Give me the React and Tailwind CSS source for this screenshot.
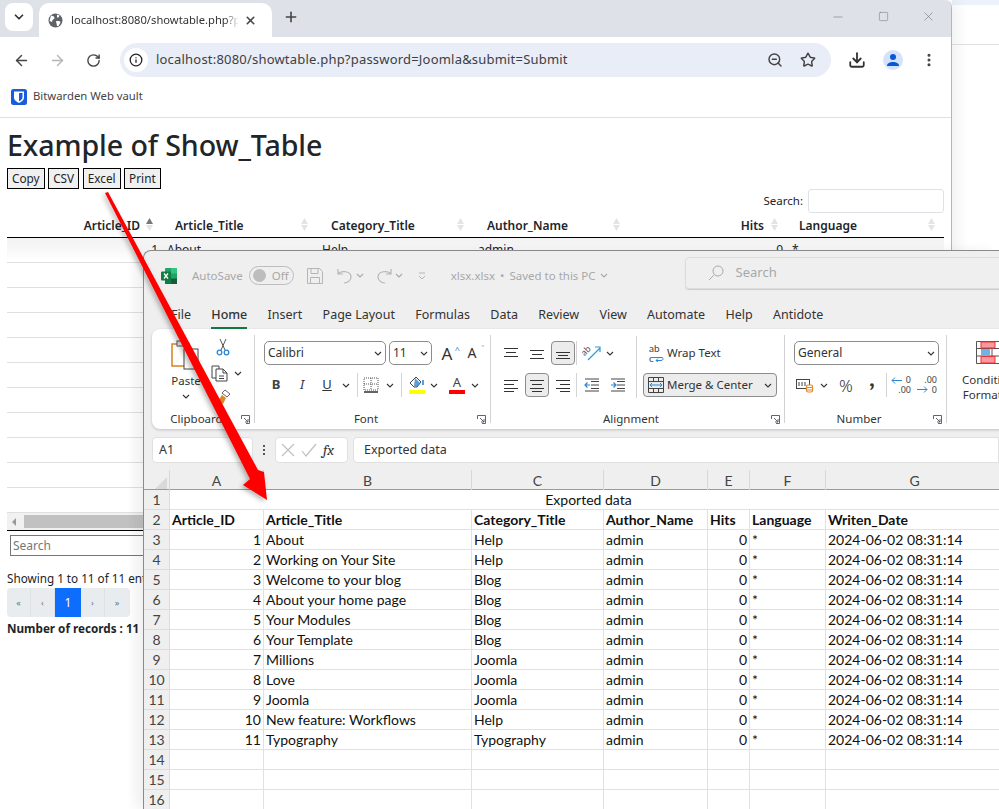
import React from "react";
import { ArrowLeft, ArrowRight, RotateCw, X, Plus, ChevronDown, Star, Download, MoreVertical, Info, ZoomOut, Minus, Square } from "lucide-react";

const ui = { fontFamily: '"Noto Sans", sans-serif' };
const calibri = { fontFamily: 'Lato, sans-serif' };

const Chev = ({ className = "" }) => (
  <svg width="8" height="5" viewBox="0 0 8 5" className={`shrink-0 ${className}`}><path d="M1 1l3 3 3-3" fill="none" stroke="currentColor" strokeWidth="1.1" /></svg>
);
const Lines = ({ rows, color = "#333" }) => (
  <svg width="16" height="14" viewBox="0 0 16 14">
    {rows.map(([a, b, y], i) => <path key={i} d={`M${a} ${y + 0.5}H${b}`} stroke={color} strokeWidth="1" />)}
  </svg>
);
const Launcher = () => (
  <svg width="9" height="9" viewBox="0 0 9 9" className="text-gray-600"><path d="M0.5 4V0.5H8.5V8.5H5M3 3l4 4M7 4v3H4" fill="none" stroke="currentColor" strokeWidth="0.9" /></svg>
);
const Divider = () => <div className="w-px h-[24px] bg-[#d4d4d4] shrink-0" />;

function Group({ label, className, children, launcher = true }) {
  return (
    <div className={`h-[88px] shrink-0 border-r border-[#d2d2d2] flex flex-col ${className}`}>
      {children}
      <div className="mt-auto -mb-[4px] h-[16px] flex items-center text-[11.5px] text-[#333]">
        <div className="flex-1 text-center">{label}</div>
        {launcher && <div className="w-[13px] flex items-center"><Launcher /></div>}
      </div>
    </div>
  );
}

function PasteIcon() {
  return (
    <svg width="30" height="30" viewBox="0 0 30 30">
      <rect x="1" y="4" width="17" height="22" fill="#fff" stroke="#d98a2b" strokeWidth="1.6" />
      <rect x="6" y="1" width="8" height="5" fill="#f4f4f4" stroke="#555" />
      <rect x="13" y="9" width="14" height="20" fill="#fff" stroke="#444" />
    </svg>
  );
}
function Scissors() {
  return (
    <svg width="14" height="18" viewBox="0 0 14 18">
      <path d="M4 1l5 11M10 1L5 12" stroke="#555" strokeWidth="1" fill="none" />
      <circle cx="3.5" cy="14.5" r="2.3" fill="none" stroke="#2e86d1" strokeWidth="1.3" />
      <circle cx="10.5" cy="14.5" r="2.3" fill="none" stroke="#2e86d1" strokeWidth="1.3" />
    </svg>
  );
}
function CopyIcon() {
  return (
    <svg width="17" height="17" viewBox="0 0 17 17" fill="none" stroke="#444">
      <path d="M5 13H1V1h7v3" />
      <path d="M5 4h7l4 4v8H5zM12 4v4h4M8 11h5M8 13.5h5" />
    </svg>
  );
}
function Brush() {
  return (
    <svg width="14" height="16" viewBox="0 0 14 16">
      <path d="M8 1l5 4-3 3-5-4z" fill="none" stroke="#666" />
      <path d="M5 6l4 3-3 6-5-3z" fill="#d98a2b" />
    </svg>
  );
}
function BorderIcon() {
  return (
    <svg width="16" height="16" viewBox="0 0 16 16" fill="none">
      <path d="M1 1h14v12H1zM8 1v12M1 7h14" stroke="#555" strokeDasharray="1 1" />
      <path d="M1 15h14" stroke="#222" strokeWidth="1.4" />
    </svg>
  );
}
function FillIcon() {
  return (
    <div className="flex flex-col items-center">
      <svg width="16" height="13" viewBox="0 0 16 13" fill="none">
        <path d="M1 7l6-6 5 5-4 5H5z" stroke="#444" />
        <path d="M6 2l5 5-3 4-3-1z" fill="#2e86d1" opacity=".8" />
        <path d="M14 4v5" stroke="#2e86d1" strokeWidth="1.6" />
      </svg>
      <div className="w-[16px] h-[4px] bg-[#ffff00] mt-px" />
    </div>
  );
}
function FontColorIcon() {
  return (
    <div className="flex flex-col items-center text-[13px] leading-[13px] text-[#444]">
      <span>A</span>
      <div className="w-[16px] h-[4px] bg-[#ff0000] mt-px" />
    </div>
  );
}
function Orient() {
  return (
    <svg width="20" height="18" viewBox="0 0 20 18" fill="none">
      <text x="0" y="10" fontSize="9" fill="#444" transform="rotate(-45 4 8)" style={calibri}>ab</text>
      <path d="M6 16L18 4M13 3h5v5" stroke="#2e9bdc" strokeWidth="1.2" />
    </svg>
  );
}
function Indent({ flip }) {
  return (
    <svg width="16" height="14" viewBox="0 0 16 14" fill="none">
      <path d="M7 3.500h8M7 7h8M7 10.500h8M1 13h14M1 1h14" stroke="#444" />
      {flip
        ? <path d="M1 7h5M3.500 4.500L6 7 3.500 9.500" stroke="#2e86d1" strokeWidth="1.2" />
        : <path d="M1 7h5M3.500 4.500L1 7l2.500 2.500" stroke="#2e86d1" strokeWidth="1.2" />}
    </svg>
  );
}
function WrapIcon() {
  return (
    <div className="relative w-[14px] h-[20px] text-[10px] leading-[10px] text-[#444]" style={calibri}>
      <span>ab<br />c</span>
      <svg width="11" height="8" viewBox="0 0 11 8" className="absolute right-[-1px] bottom-[1px]" fill="none"><path d="M0 3.500h9c1.500 0 1.500 3-1 3H3M5 4.500L3 6.500 5 8" stroke="#2e86d1" /></svg>
    </div>
  );
}
function MergeIcon() {
  return (
    <svg width="16" height="16" viewBox="0 0 16 16" fill="none">
      <path d="M.5.5h15v15H.5zM.5 4.500h15M.5 11.500h15M5.500.5v4M10.500.5v4M5.500 11.500v4M10.500 11.500v4" stroke="#444" />
      <path d="M2 8h12M4 6L2 8l2 2M12 6l2 2-2 2" stroke="#2e86d1" />
    </svg>
  );
}
function AccIcon() {
  return (
    <svg width="18" height="15" viewBox="0 0 18 15" fill="none">
      <rect x=".5" y="1.500" width="13" height="9" stroke="#444" fill="#fff" />
      <path d="M3 4v4M6 4v4M9 4v4" stroke="#444" />
      <rect x="10.500" y="7" width="6" height="7" rx="1.500" fill="#fff" stroke="#e08a2b" strokeWidth="1.200" />
      <path d="M10.500 9.500h6M10.500 12h6" stroke="#e08a2b" />
    </svg>
  );
}
function DecIcon({ inc }) {
  return (
    <div className="relative w-[20px] h-[20px] text-[9px] leading-[10px] text-[#444] text-right" style={ui}>
      {inc ? <div>0<br />.00</div> : <div>.00<br />0</div>}
      <svg width="11" height="7" viewBox="0 0 11 7" fill="none" className={`absolute ${inc ? "left-0 top-[2px]" : "left-0 bottom-[2px]"}`}>
        {inc ? <path d="M11 3.500H1M4 .5l-3 3 3 3" stroke="#2e86d1" /> : <path d="M0 3.500h10M7 .5l3 3-3 3" stroke="#2e86d1" />}
      </svg>
    </div>
  );
}
function CondIcon() {
  return (
    <svg width="34" height="23" viewBox="0 0 34 23" fill="none">
      <path d="M.5.5h33v22H.5zM.5 7.500h33M.5 15h33M8 .5v22M16 .5v22" stroke="#555" />
      <rect x="5" y="1" width="14" height="6" fill="#f59aa0" stroke="#e33" />
      <rect x="5" y="8" width="9" height="7" fill="#6fb4e6" />
      <rect x="5" y="15.500" width="14" height="6.500" fill="#f59aa0" stroke="#e33" />
    </svg>
  );
}
function ExcelLogo() {
  return (
    <svg width="16" height="16" viewBox="0 0 16 16" className="shrink-0">
      <rect x="4" y="0" width="12" height="16" rx="1" fill="#21a366" />
      <rect x="10" y="0" width="6" height="5.500" fill="#33c481" />
      <rect x="10" y="10.500" width="6" height="5.500" fill="#185c37" />
      <rect x="4" y="10.500" width="6" height="5.500" fill="#107c41" />
      <rect x="0" y="3.500" width="10" height="9" rx="1" fill="#107c41" />
      <path d="M3 5.500l4 5M7 5.500l-4 5" stroke="#fff" strokeWidth="1.300" />
    </svg>
  );
}
function Bitwarden() {
  return (
    <svg width="16" height="16" viewBox="0 0 16 16">
      <rect width="16" height="16" rx="2.500" fill="#175ddc" />
      <path d="M3 2.500h10v6c0 3-3 4.500-5 5.500-2-1-5-2.500-5-5.500z" fill="#fff" />
      <path d="M8 4h3.500v4.500c0 2-2 3-3.500 3.800z" fill="#175ddc" />
    </svg>
  );
}
function SolidGlobe() {
  return (
    <svg width="15" height="15" viewBox="0 0 15 15" className="shrink-0">
      <circle cx="7.500" cy="7.500" r="7" fill="#5f6368" />
      <path d="M3 2.500l3 1 .5 2-2 1.500-.5 2L1.500 8zM9 1.500l2.500 1-1 2H9zM8 8h3.500l1 1.500-2 3.500H9z" fill="#fff" />
    </svg>
  );
}

const headers = [
  ["Article_ID", "pl-0 justify-end pr-[22px]", true],
  ["Article_Title", "pl-[13px]"],
  ["Category_Title", "pl-[14px]"],
  ["Author_Name", "pl-[14px]"],
  ["Hits", "justify-end pr-[23px]"],
  ["Language", "pl-[12px]"],
];

function WebHeader({ text, cls, sorted }) {
  return (
    <div className={`relative flex items-center h-full ${cls}`}>
      <span className="mt-[2px] text-[12px] font-semibold text-[#212529] leading-none">{text}</span>
      <svg width="9" height="14" viewBox="0 0 9 14" className="absolute right-[8px] top-[5px]">
        <path d="M4.500 0L8 6H1z" fill={sorted ? "#777" : "#e4e4e4"} />
        <path d="M4.500 13L8 7H1z" fill="#e4e4e4" />
      </svg>
    </div>
  );
}

function Browser() {
  return (
    <div className="absolute left-0 top-0 w-[952px] h-[809px] bg-white border-r border-[#b5b5b5] rounded-tr-[8px] overflow-hidden flex flex-col shadow-[6px_0_14px_rgba(0,0,0,0.06)]" style={ui}>
      <div className="h-[37px] bg-[#dee1e8] flex items-start pt-[3px] pl-[5px] shrink-0">
        <div className="w-[28px] h-[28px] bg-white rounded-[8px] flex items-center justify-center text-[#333]"><ChevronDown size={14} strokeWidth={3} /></div>
        <div className="ml-[6px] w-[233px] h-[34px] bg-white rounded-t-[10px] flex items-center pl-[9px] pr-[7px]">
          <SolidGlobe />
          <span className="ml-[8px] text-[11.200px] text-[#333] whitespace-nowrap overflow-hidden w-[168px] shrink-0 [mask-image:linear-gradient(to_left,transparent,black_14px)]">localhost:8080/showtable.php?password=Joomla</span>
          <X size={13} strokeWidth={3} className="ml-[5px] shrink-0 text-[#444]" />
        </div>
        <Plus size={16} strokeWidth={2.400} className="ml-[11px] mt-[6px] text-[#444]" />
        <div className="ml-auto flex items-center mt-[6px] text-[#777] pr-[15px]">
          <Minus size={14} strokeWidth={1} className="mr-[33px]" />
          <Square size={11} strokeWidth={1.200} className="mr-[32px]" />
          <X size={15} strokeWidth={1} />
        </div>
      </div>
      <div className="h-[43px] pt-[3px] flex items-center shrink-0 relative rounded-t-[8px]">
        <ArrowLeft size={17} strokeWidth={2} className="ml-[13px] text-[#444]" />
        <ArrowRight size={17} strokeWidth={2} className="ml-[19px] text-[#b5b5b5]" />
        <RotateCw size={15} strokeWidth={2.200} className="ml-[20px] text-[#444]" />
        <div className="ml-[19px] w-[711px] h-[34px] bg-[#e9edf7] rounded-full flex items-center pl-[4px] pr-[15px]">
          <div className="w-[24px] h-[24px] rounded-full bg-white flex items-center justify-center"><Info size={14} strokeWidth={2.200} className="text-[#222]" /></div>
          <span className="ml-[8px] text-[13px] text-[#3c4043] tracking-[0.2px]">localhost:8080/showtable.php?password=Joomla&amp;submit=Submit</span>
          <ZoomOut size={16} strokeWidth={2.200} className="ml-auto mr-[1px] text-[#444]" />
          <Star size={16} strokeWidth={2.200} className="ml-[16px] text-[#444]" />
        </div>
        <Download size={18} strokeWidth={2.400} className="ml-[17px] text-[#333]" />
        <div className="ml-[17px] w-[20px] h-[20px] rounded-full bg-[#d3e3fd] flex items-center justify-center overflow-hidden">
          <svg width="14" height="14" viewBox="0 0 14 14"><circle cx="7" cy="4" r="3" fill="#0b57d0" /><path d="M1 13c0-3 3-4 6-4s6 1 6 4z" fill="#0b57d0" /></svg>
        </div>
        <MoreVertical size={16} strokeWidth={2.600} className="ml-[18px] text-[#444]" />
      </div>
      <div className="h-[38px] pb-[4px] border-b border-[#e0e0e0] flex items-center pl-[11px] shrink-0">
        <Bitwarden />
        <span className="ml-[6px] text-[11.300px] text-[#444]">Bitwarden Web vault</span>
      </div>
      <div className="px-[7px] flex-1 flex flex-col text-[#212529]">
        <h1 className="text-[28.600px] leading-[36px] font-medium mt-[9px] tracking-[-0.1px]">Example of Show_Table</h1>
        <div className="flex gap-[3.500px] mt-[5px]">
          {["Copy", "CSV", "Excel", "Print"].map((b) => (
            <button key={b} className="h-[21px] px-[4px] bg-[#f0f0f0] border border-black text-[11.800px] leading-none">{b}</button>
          ))}
        </div>
        <div className="flex items-center justify-end h-[24px] text-[11.500px] w-[937px]">
          <span className="mr-[5px]">Search:</span>
          <div className="w-[136px] h-[24px] border border-[#dee2e6] rounded-[3px] bg-white" />
        </div>
        <div className="grid grid-cols-[155px_155px_156px_156px_158px_157px] h-[25px] w-[937px] border-b border-black shrink-0">
          {headers.map(([t, c, s]) => <WebHeader key={t} text={t} cls={c} sorted={s} />)}
        </div>
        <div className="grid grid-cols-[155px_155px_156px_156px_158px_157px] w-[937px] text-[12px] shrink-0 border-b border-[#dfdfdf] h-[25px] items-center bg-gradient-to-b from-[#f2f2f2] to-white">
          <div className="text-right pr-[4px]">1</div><div className="pl-[5px]">About</div><div className="pl-[5px]">Help</div><div className="pl-[5px]">admin</div><div className="text-right pr-[4px]">0</div><div className="pl-[5px]">*</div>
        </div>
        {Array.from({ length: 10 }).map((_, i) => (
          <div key={i} className="h-[25px] w-[937px] border-b border-[#dfdfdf] shrink-0" />
        ))}
        <div className="h-[18px] w-[937px] bg-[#f1f1f1] border-b border-black flex items-center shrink-0">
          <span className="w-0 h-0 ml-[5px] border-y-[4px] border-y-transparent border-r-[4px] border-r-[#999]" />
          <div className="ml-[8px] w-[900px] h-[13px] bg-[#c1c1c1]" />
        </div>
        <div className="h-[21px] w-[300px] ml-[3px] mt-[4px] border border-[#767676] text-[12px] text-[#777] pl-[2px] flex items-center shrink-0">Search</div>
        <div className="mt-[14px] text-[11.700px] leading-[16px] whitespace-nowrap">Showing 1 to 11 of 11 entries</div>
        <div className="mt-[2px] flex h-[29px] w-[123px] bg-[#e9ecef] rounded-[4px] overflow-hidden text-[9px] text-[#6c757d] shrink-0">
          {["«", "‹"].map((s) => <div key={s} className="w-[24px] border-r border-[#dee2e6] flex items-center justify-center">{s}</div>)}
          <div className="w-[26px] bg-[#0d6efd] text-white text-[12px] flex items-center justify-center">1</div>
          {["›", "»"].map((s) => <div key={s} className="w-[24px] border-r border-[#dee2e6] flex items-center justify-center last:border-r-0">{s}</div>)}
        </div>
        <div className="mt-[3px] text-[11.700px] font-bold">Number of records  : 11</div>
      </div>
    </div>
  );
}

const rows = [
  [1, "About", "Help"], [2, "Working on Your Site", "Help"], [3, "Welcome to your blog", "Blog"],
  [4, "About your home page", "Blog"], [5, "Your Modules", "Blog"], [6, "Your Template", "Blog"],
  [7, "Millions", "Joomla"], [8, "Love", "Joomla"], [9, "Joomla", "Joomla"],
  [10, "New feature: Workflows", "Help"], [11, "Typography", "Typography"],
];
const cols = "grid grid-cols-[26px_94px_208px_132px_104px_42px_76px_178px]";
const cell = "h-[20px] bg-white border-r border-b border-[#e1e1e1] px-[2px] flex items-center whitespace-nowrap overflow-hidden";
const rh = "h-[20px] bg-[#efefef] border-r border-b border-[#dcdcdc] flex items-center justify-center text-[#444]";

function Sheet() {
  return (
    <div className="text-[14px] text-[#111]" style={calibri}>
      <div className={`${cols} h-[20px] border-b border-[#9a9a9a] bg-[#efefef] text-[#444]`}>
        <div className="relative border-r border-[#d8d8d8]">
          <span className="absolute right-[2px] bottom-[2px] w-0 h-0 border-l-[12px] border-l-transparent border-b-[12px] border-b-[#d9d9d9]" />
        </div>
        {["A", "B", "C", "D", "E", "F", "G"].map((c) => (
          <div key={c} className="border-r border-[#d8d8d8] flex items-center justify-center">{c}</div>
        ))}
      </div>
      <div className={cols}>
        <div className={rh}>1</div>
        <div className={`${cell} col-span-7 justify-center pl-[6px]`}>Exported data</div>
        <div className={rh}>2</div>
        {["Article_ID", "Article_Title", "Category_Title", "Author_Name", "Hits", "Language", "Writen_Date"].map((h) => (
          <div key={h} className={`${cell} font-bold`}>{h}</div>
        ))}
        {rows.map(([id, title, cat], i) => (
          <React.Fragment key={id}>
            <div className={rh}>{i + 3}</div>
            <div className={`${cell} justify-end`}>{id}</div>
            <div className={cell}>{title}</div>
            <div className={cell}>{cat}</div>
            <div className={cell}>admin</div>
            <div className={`${cell} justify-end`}>0</div>
            <div className={cell}>*</div>
            <div className={cell}>2024-06-02 08:31:14</div>
          </React.Fragment>
        ))}
        {[14, 15, 16].map((n) => (
          <React.Fragment key={n}>
            <div className={rh}>{n}</div>
            {Array.from({ length: 7 }).map((_, i) => <div key={i} className={cell} />)}
          </React.Fragment>
        ))}
      </div>
    </div>
  );
}

function Excel() {
  const tabs = ["File", "Home", "Insert", "Page Layout", "Formulas", "Data", "Review", "View", "Automate", "Help", "Antidote"];
  return (
    <div className="absolute left-[143px] top-[250px] w-[856px] h-[559px] bg-[#efefef] border-l border-t border-[#8a8a8a] rounded-tl-[8px] overflow-hidden flex flex-col shadow-[-8px_0_12px_rgba(0,0,0,0.06)]" style={ui}>
      <div className="h-[44px] pt-[5px] flex items-center text-[#a8a8a8] text-[11.500px] shrink-0 pl-[17px] whitespace-nowrap">
        <ExcelLogo />
        <span className="ml-[15px]">AutoSave</span>
        <div className="ml-[6px] w-[45px] h-[19px] shrink-0 rounded-full border border-[#bdbdbd] flex items-center pl-[3px]">
          <span className="w-[13px] h-[13px] rounded-full bg-[#bdbdbd]" />
          <span className="ml-[6px]">Off</span>
        </div>
        <svg width="16" height="16" viewBox="0 0 16 16" fill="none" stroke="#b5b5b5" className="ml-[13px] shrink-0"><path d="M.5.5h12l3 3v12H.5zM4 .5v5h7v-5M3.500 15.500v-6h9v6" /></svg>
        <svg width="16" height="16" viewBox="0 0 16 16" fill="none" stroke="#b5b5b5" strokeWidth="1.200" className="ml-[14px] shrink-0"><path d="M1 1v5h5M1 6c3-4 13-3 13 3 0 3-3 6-7 6" /></svg>
        <Chev className="ml-[3px]" />
        <svg width="16" height="16" viewBox="0 0 16 16" fill="none" stroke="#b5b5b5" strokeWidth="1.200" className="ml-[12px] shrink-0"><path d="M15 1v5h-5M15 6C12 2 2 3 2 9c0 3 3 6 7 6" /></svg>
        <Chev className="ml-[3px]" />
        <svg width="8" height="8" viewBox="0 0 8 8" fill="none" stroke="#b5b5b5" className="ml-[15px] shrink-0"><path d="M1 1h6M1 4l3 3 3-3" /></svg>
        <span className="ml-[25px]">xlsx.xlsx</span>
        <span className="ml-[5px]">•</span>
        <span className="ml-[5px]">Saved to this PC</span>
        <Chev className="ml-[4px]" />
        <div className="ml-[77px] w-[330px] h-[32px] shrink-0 -mt-[5px] rounded-[4px] border border-[#dcdcdc] shadow-[0_1px_1px_rgba(0,0,0,0.15)] flex items-center pl-[22px] text-[13px]">
          <svg width="16" height="16" viewBox="0 0 16 16" fill="none" stroke="#aaa"><circle cx="10" cy="6" r="5" /><path d="M6 10l-5 5" /></svg>
          <span className="ml-[12px]">Search</span>
        </div>
      </div>
      <div className="h-[34px] flex gap-[20.300px] text-[12.500px] text-[#333] pl-[27px] pt-[11px] shrink-0">
        {tabs.map((t) => (
          <div key={t} className={`h-[23px] whitespace-nowrap ${t === "Home" ? "border-b-[2px] border-[#107c41] font-medium" : ""}`}>{t}</div>
        ))}
      </div>
      <div className="ml-[8px] w-[900px] h-[100px] shrink-0 bg-white rounded-l-[8px] shadow-[0_1px_3px_rgba(0,0,0,0.2)] flex py-[6px] text-[#333]">
        <Group label="Clipboard" className="w-[103px]">
          <div className="flex">
            <div className="ml-[14px] mt-[5px] w-[40px] flex flex-col items-center text-[11.500px]">
              <PasteIcon />
              <span className="mt-[2px]">Paste</span>
              <Chev className="mt-[5px]" />
            </div>
            <div className="ml-[5px] flex flex-col pt-[1px]">
              <div className="w-[24px] h-[22px] flex items-center justify-center"><Scissors /></div>
              <div className="mt-[4px] h-[22px] flex items-center"><CopyIcon /><Chev className="ml-[6px]" /></div>
              <div className="mt-[2px] w-[26px] h-[22px] flex items-center justify-center"><Brush /></div>
            </div>
          </div>
        </Group>
        <Group label="Font" className="w-[236px]">
          <div className="flex items-center ml-[9px] mt-[6px] h-[24px]">
            <div className="w-[122px] h-[24px] border border-[#8c8c8c] rounded-[5px] flex items-center justify-between px-[3px] text-[12px]"><span>Calibri</span><Chev /></div>
            <div className="ml-[3px] w-[43px] h-[24px] border border-[#8c8c8c] rounded-[5px] flex items-center justify-between px-[3px] text-[12px]"><span>11</span><Chev /></div>
            <div className="w-[26px] text-center text-[17px] leading-none ml-[2px] relative">A<span className="absolute right-0 top-0 text-[9px] text-[#2e86d1]">^</span></div>
            <div className="w-[24px] text-center text-[14px] leading-none relative">A<span className="absolute right-0 -top-[2px] text-[9px] text-[#2e86d1]">˅</span></div>
          </div>
          <div className="flex items-center ml-[9px] mt-[8px] h-[24px]">
            <div className="w-[24px] text-center text-[13px] font-bold text-[#444]">B</div>
            <div className="ml-[2px] w-[24px] text-center text-[13px] italic">I</div>
            <div className="ml-[1px] w-[24px] text-center text-[13px] underline">U</div>
            <div className="ml-[1px] w-[12px] flex justify-center"><Chev /></div>
            <div className="w-[5px]" /><Divider />
            <div className="ml-[2px] w-[22px] flex justify-center"><BorderIcon /></div>
            <div className="ml-[2px] w-[12px] flex justify-center"><Chev /></div>
            <div className="w-[5px]" /><Divider />
            <div className="ml-[4px] w-[22px] flex justify-center"><FillIcon /></div>
            <div className="w-[12px] flex justify-center"><Chev /></div>
            <div className="ml-[6px] w-[22px] flex justify-center"><FontColorIcon /></div>
            <div className="ml-[1px] w-[12px] flex justify-center"><Chev /></div>
          </div>
        </Group>
        <Group label="Alignment" className="w-[294px]">
          <div className="flex">
            <div className="w-[145px] shrink-0">
              <div className="flex items-center ml-[7px] mt-[6px] h-[24px]">
                <div className="w-[26px] flex justify-center"><Lines rows={[[1, 15, 2], [3, 13, 6], [1, 15, 10]]} /></div>
                <div className="w-[26px] flex justify-center"><Lines rows={[[1, 15, 4], [3, 13, 8], [1, 15, 12]]} /></div>
                <div className="w-[24px] mx-[1px] h-[24px] bg-[#ececec] border border-[#8c8c8c] rounded-[4px] flex items-center justify-center"><Lines rows={[[1, 15, 6], [3, 13, 9], [1, 15, 12]]} /></div>
                <Divider />
                <div className="ml-[3px] w-[24px] flex justify-center"><Orient /></div>
                <Chev className="ml-[2px]" />
              </div>
              <div className="flex items-center ml-[7px] mt-[8px] h-[24px]">
                <div className="w-[26px] flex justify-center"><Lines rows={[[1, 15, 2], [1, 11, 6], [1, 15, 10], [1, 11, 13]]} /></div>
                <div className="w-[24px] mx-[1px] h-[24px] bg-[#ececec] border border-[#8c8c8c] rounded-[4px] flex items-center justify-center"><Lines rows={[[1, 15, 2], [3, 13, 6], [1, 15, 10], [3, 13, 13]]} /></div>
                <div className="w-[26px] flex justify-center"><Lines rows={[[1, 15, 2], [5, 15, 6], [1, 15, 10], [5, 15, 13]]} /></div>
                <Divider />
                <div className="ml-[3px] w-[24px] flex justify-center"><Indent /></div>
                <div className="ml-[2px] w-[24px] flex justify-center"><Indent flip /></div>
              </div>
            </div>
            <div className="w-px h-[62px] mt-[1px] bg-[#d4d4d4]" />
            <div>
              <div className="flex items-center ml-[12px] mt-[6px] h-[24px] text-[11.500px]"><WrapIcon /><span className="ml-[4px]">Wrap Text</span></div>
              <div className="flex items-center ml-[6px] mt-[8px] w-[134px] h-[24px] bg-[#ececec] border border-[#8c8c8c] rounded-[4px] pl-[4px] pr-[1px] text-[11.500px] whitespace-nowrap">
                <MergeIcon /><span className="ml-[3px]">Merge &amp; Center</span><Chev className="ml-auto mr-[3px]" />
              </div>
            </div>
          </div>
        </Group>
        <Group label="Number" className="w-[162px]">
          <div className="ml-[9px] mt-[6px] w-[145px] h-[24px] border border-[#8c8c8c] rounded-[5px] flex items-center justify-between px-[3px] text-[12px]"><span>General</span><Chev /></div>
          <div className="flex items-center ml-[9px] mt-[8px] h-[24px]">
            <div className="w-[22px] flex justify-center"><AccIcon /></div>
            <div className="ml-[2px] w-[12px] flex justify-center"><Chev /></div>
            <div className="ml-[5px] w-[22px] text-center text-[17px] leading-none font-light">%</div>
            <div className="ml-[4px] w-[22px] h-[24px] text-center text-[24px] font-bold leading-[12px] font-serif">,</div>
            <div className="w-[3px]" /><Divider />
            <div className="ml-[3px] w-[22px] flex justify-center"><DecIcon inc /></div>
            <div className="ml-[4px] w-[22px] flex justify-center"><DecIcon /></div>
          </div>
        </Group>
        <div className="w-[60px] ml-[16px] shrink-0 flex flex-col items-center text-[11.500px] leading-[15px] pt-[6px]">
          <CondIcon />
          <span className="mt-[8px] whitespace-nowrap text-center">Conditional<br />Formatting</span>
        </div>
      </div>
      <div className="mt-[8px] h-[26px] ml-[8px] flex items-stretch text-[12.500px] shrink-0 text-[#333]">
        <div className="w-[101px] bg-white border border-[#e0e0e0] rounded-[4px] pl-[6px] flex items-center">A1</div>
        <div className="w-[22px] flex flex-col items-center justify-center gap-[2px] ml-0">
          <span className="w-[2px] h-[2px] bg-[#555]" /><span className="w-[2px] h-[2px] bg-[#555]" /><span className="w-[2px] h-[2px] bg-[#555]" />
        </div>
        <div className="w-[73px] bg-white border border-[#e0e0e0] rounded-[4px] flex items-center px-[5px] gap-[6px]">
          <svg width="14" height="14" viewBox="0 0 14 14" stroke="#c0c0c0" strokeWidth="1.200" fill="none"><path d="M1 1l12 12M13 1L1 13" /></svg>
          <svg width="16" height="14" viewBox="0 0 16 14" stroke="#c0c0c0" strokeWidth="1.200" fill="none"><path d="M1 8l4 5L15 1" /></svg>
          <span className="italic text-[15px] leading-none font-serif text-[#333]">fx</span>
        </div>
        <div className="ml-[5px] flex-1 bg-white border border-[#e0e0e0] rounded-l-[4px] pl-[10px] flex items-center">Exported data</div>
      </div>
      <div className="mt-[7px]"><Sheet /></div>
    </div>
  );
}

export default function App() {
  return (
    <div className="relative w-[999px] h-[809px] overflow-hidden bg-white">
      <div className="absolute left-[952px] top-0 w-[47px] h-[45px] border-b border-[#e2e2e2]">
        <div className="h-[5px] bg-[#edf1f9]" />
      </div>
      <Browser />
      <Excel />
      <svg width="999" height="809" viewBox="0 0 999 809" className="absolute left-0 top-0 pointer-events-none">
        <defs>
          <filter id="sh" x="-20%" y="-20%" width="140%" height="140%"><feDropShadow dx="-2" dy="2" stdDeviation="2.500" floodColor="#000" floodOpacity="0.3" /></filter>
        </defs>
        <polygon points="105,193 108,192 258,470 264,472 267,500 243,485 250,479" fill="#ff0000" filter="url(#sh)" />
      </svg>
    </div>
  );
}
